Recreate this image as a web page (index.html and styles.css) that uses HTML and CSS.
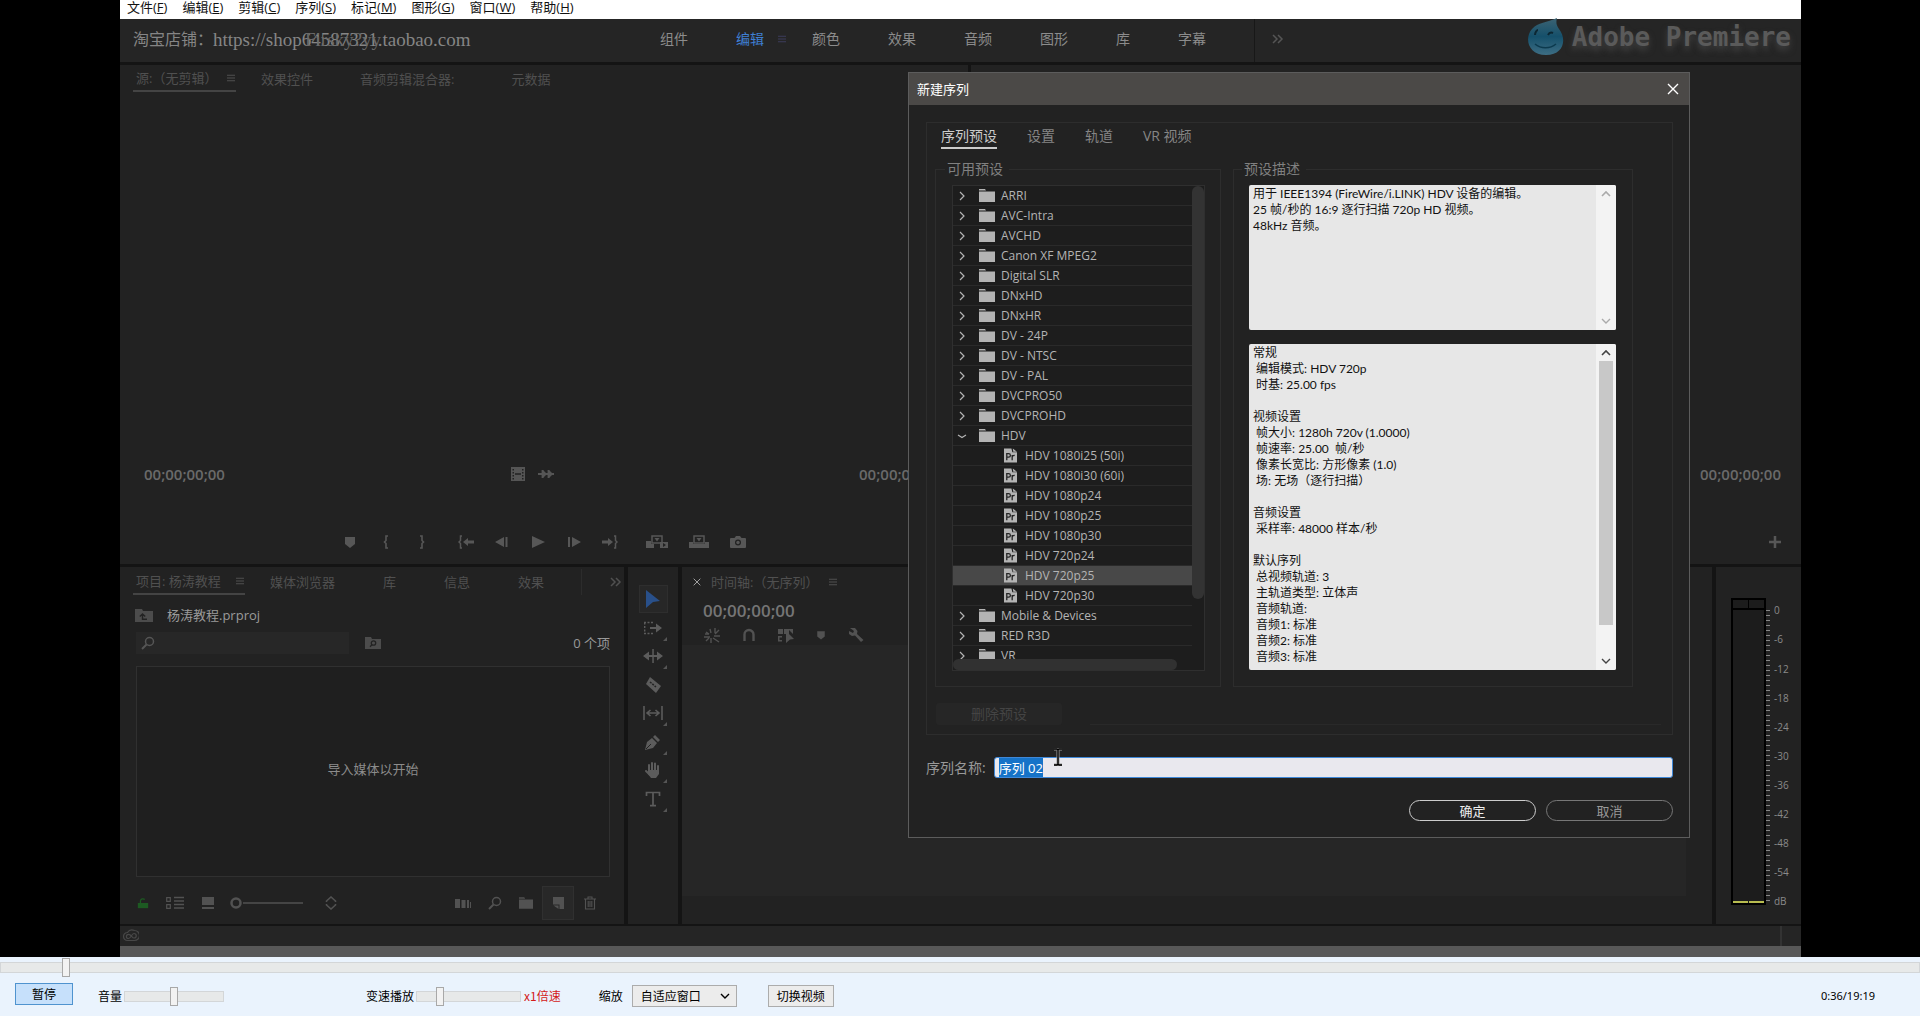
FILE: index.html
```html
<!DOCTYPE html>
<html lang="zh-CN">
<head>
<meta charset="utf-8">
<title>新建序列 - 视频播放器</title>
<link rel="stylesheet" href="styles.css">
</head>
<body>
<svg class="symbols" aria-hidden="true">
  <symbol id="i-menu" viewBox="0 0 10 10"><path d="M0 1.5h10M0 5h10M0 8.5h10" stroke="currentColor" stroke-width="1.3"/></symbol>
  <symbol id="i-more" viewBox="0 0 12 10"><path d="M1 1l4 4-4 4M6 1l4 4-4 4" fill="none" stroke="currentColor" stroke-width="1.5"/></symbol>
  <symbol id="i-film" viewBox="0 0 16 16"><path fill-rule="evenodd" d="M1 1h14v14H1zM2.500 3v1.500H4V3zM2.500 6v1.500H4V6zM2.500 9v1.500H4V9zM2.500 12v1.500H4V12zM12 3v1.500h1.500V3zM12 6v1.500h1.500V6zM12 9v1.500h1.500V9zM12 12v1.500h1.500V12zM5 7.300v1.400h6V7.300z" fill="currentColor"/></symbol>
  <symbol id="i-wave" viewBox="0 0 16 16"><path d="M0 8h16M4.500 4v8M10.500 4v8" stroke="currentColor" stroke-width="1.800"/><path d="M5 4l4 4-4 4zM11 4l4 4-4 4z" fill="currentColor"/></symbol>
  <symbol id="i-marker" viewBox="0 0 16 16"><path d="M3 3h10v7l-5 4-5-4z" fill="currentColor"/></symbol>
  <symbol id="i-in" viewBox="0 0 16 16"><path d="M10 2H8v4.500L6.500 8 8 9.500V14h2" fill="none" stroke="currentColor" stroke-width="1.600"/></symbol>
  <symbol id="i-out" viewBox="0 0 16 16"><path d="M6 2h2v4.500L9.500 8 8 9.500V14H6" fill="none" stroke="currentColor" stroke-width="1.600"/></symbol>
  <symbol id="i-goin" viewBox="0 0 16 16"><path d="M4 2H2.500v4.500L1 8l1.500 1.500V14H4" fill="none" stroke="currentColor" stroke-width="1.500"/><path d="M5 8l5-4v2.500h6v3h-6V12z" fill="currentColor"/></symbol>
  <symbol id="i-goout" viewBox="0 0 16 16"><path d="M12 2h1.500v4.500L15 8l-1.500 1.500V14H12" fill="none" stroke="currentColor" stroke-width="1.500"/><path d="M11 8L6 4v2.500H0v3h6V12z" fill="currentColor"/></symbol>
  <symbol id="i-back" viewBox="0 0 16 16"><path d="M10 3v10L1 8zM11.500 3h2v10h-2z" fill="currentColor"/></symbol>
  <symbol id="i-play" viewBox="0 0 16 16"><path d="M2 2l13 6-13 6z" fill="currentColor"/></symbol>
  <symbol id="i-fwd" viewBox="0 0 16 16"><path d="M6 3v10l9-5zM2 3h2v10H2z" fill="currentColor"/></symbol>
  <symbol id="i-insert" viewBox="0 0 22 16"><path d="M6 2h10v7H6z" fill="none" stroke="currentColor" stroke-width="1.500"/><path d="M8.500 4h5L11 7.500zM0 7h5v3h3v4H0zM14 8h8v6h-8z" fill="currentColor"/><path d="M17 9l3 2-3 2z" fill="#222"/></symbol>
  <symbol id="i-over" viewBox="0 0 22 16"><path d="M6 2h10v7H6z" fill="none" stroke="currentColor" stroke-width="1.500"/><path d="M8.500 4h5L11 7.500zM1 8h4v2h12V8h4v6H1z" fill="currentColor"/></symbol>
  <symbol id="i-camera" viewBox="0 0 16 16"><path fill-rule="evenodd" d="M1 4h3.500l1.500-2h4l1.500 2H15a1 1 0 0 1 1 1v8a1 1 0 0 1-1 1H1a1 1 0 0 1-1-1V5a1 1 0 0 1 1-1zM8 5.500a3 3 0 1 0 0 6 3 3 0 0 0 0-6z" fill="currentColor"/><circle cx="8" cy="8.500" r="1.700" fill="currentColor"/></symbol>
  <symbol id="i-plus" viewBox="0 0 12 12"><path d="M6 0v12M0 6h12" stroke="currentColor" stroke-width="2.500"/></symbol>
  <symbol id="i-upfolder" viewBox="0 0 18 14"><path d="M0 1h7l1 2h10v11H0z" fill="currentColor"/><path d="M7.500 12V6.500M4.800 8.500l2.700-2.500 2.700 2.500M7.500 11.300H12" fill="none" stroke="#222" stroke-width="1.400"/></symbol>
  <symbol id="i-search" viewBox="0 0 14 14"><circle cx="8.500" cy="5.500" r="4" fill="none" stroke="currentColor" stroke-width="1.500"/><path d="M5.500 8.500L1 13" stroke="currentColor" stroke-width="2"/></symbol>
  <symbol id="i-findfolder" viewBox="0 0 16 14"><path d="M0 1h6l1 2h9v10H0z" fill="currentColor"/><circle cx="8.500" cy="7" r="2.200" fill="none" stroke="#222" stroke-width="1.300"/><path d="M7 8.700L5 10.700" stroke="#222" stroke-width="1.300"/></symbol>
  <symbol id="i-lock" viewBox="0 0 14 14"><path d="M1 7h12v6H1z" fill="currentColor"/><path d="M4 7V4.500a3 3 0 0 1 5-1.500" fill="none" stroke="currentColor" stroke-width="1.500"/></symbol>
  <symbol id="i-list" viewBox="0 0 18 14"><path d="M.700 1.700h3.600v3.600H.700zM.700 8.700h3.600v3.600H.700z" fill="none" stroke="currentColor" stroke-width="1.200"/><path d="M8 1.500h10M8 5h10M8 8.500h10M8 12h10" stroke="currentColor" stroke-width="1.400"/></symbol>
  <symbol id="i-thumb" viewBox="0 0 14 14"><path d="M1 1h12v8H1zM1 11h12v2H1z" fill="currentColor"/></symbol>
  <symbol id="i-zoomknob" viewBox="0 0 74 14"><circle cx="7" cy="7" r="4.500" fill="none" stroke="currentColor" stroke-width="2.500"/><path d="M14 7h60" stroke="currentColor" stroke-width="1.500"/></symbol>
  <symbol id="i-sort" viewBox="0 0 12 14"><path d="M1.500 6V5L6 1l4.500 4v1M1.500 8v1L6 13l4.500-4V8" fill="none" stroke="currentColor" stroke-width="1.600"/></symbol>
  <symbol id="i-bars" viewBox="0 0 16 12"><path d="M0 2h5v9H0zM6.500 3h4v8h-4zM12 3h2v8h-2zM15 5h1v6h-1z" fill="currentColor"/></symbol>
  <symbol id="i-folder" viewBox="0 0 16 13"><path d="M0 0h6l1 1.500H0zM0 2.500h16V13H0z" fill="currentColor"/></symbol>
  <symbol id="i-newitem" viewBox="0 0 14 14"><path d="M2 1h11v12H8.500V8.500H2z" fill="currentColor"/><path d="M2.500 9.500h5V13z" fill="currentColor"/></symbol>
  <symbol id="i-trash" viewBox="0 0 12 14"><path d="M0 3h12M4 3V1h4v2M1.500 3v10h9V3M4.200 5v6M6 5v6M7.800 5v6" fill="none" stroke="currentColor" stroke-width="1.100"/></symbol>
  <symbol id="i-cc" viewBox="0 0 16 12"><path d="M4.500 11a4 4 0 0 1 0-8C6 .500 9 0 11.500 1a5 5 0 0 1 0 10zM11 8.500C9 8.500 8 4.500 5.500 4.800a2.100 2.100 0 0 0 0 4.200C8 9 8.500 4 11 4a2.200 2.200 0 0 1 0 4.500" fill="none" stroke="currentColor" stroke-width="1.200"/></symbol>
  <symbol id="t-arrow" viewBox="0 0 16 18"><path d="M1 0l14 11-7 1-7 6z" fill="currentColor"/></symbol>
  <symbol id="t-track" viewBox="0 0 20 20"><path d="M1 4.500h10M1 15.500h10M1.700 4.500v11" fill="none" stroke="currentColor" stroke-width="1.400" stroke-dasharray="2 1.500"/><path d="M7 9h6V5.500l6 4.500-6 4.500V11H7z" fill="currentColor"/></symbol>
  <symbol id="t-ripple" viewBox="0 0 20 20"><path d="M9.300 3h1.500v14H9.300zM0 10l6-4.500V9h8V5.500L20 10l-6 4.500V11H6v3.500z" fill="currentColor"/></symbol>
  <symbol id="t-razor" viewBox="0 0 20 20"><path d="M7 2l11 9-5 7L3 9z" fill="currentColor"/><path d="M7 7l6 5" stroke="#222" stroke-width="1.500" stroke-dasharray="2 1"/></symbol>
  <symbol id="t-slip" viewBox="0 0 20 20"><path d="M1 3v14M19 3v14M5 10h10M7.500 7L4 10l3.500 3M12.500 7l3.500 3-3.500 3" fill="none" stroke="currentColor" stroke-width="1.600"/></symbol>
  <symbol id="t-pen" viewBox="0 0 20 20"><path d="M12 3l5 5-2 2-5-5zM9 6l5 5-4 5-8 2 2-8z" fill="currentColor"/><path d="M3 17l5-5" stroke="#222"/></symbol>
  <symbol id="t-hand" viewBox="0 0 20 20"><path d="M6 12V5M9 11V3M12 11V3.500M15 12V6M7 15l-4-4" stroke="currentColor" stroke-width="2" stroke-linecap="round"/><path d="M5 10h11v4l-3 4H8l-3-4z" fill="currentColor"/></symbol>
  <symbol id="t-type" viewBox="0 0 20 20"><path d="M3.500 7V3.500h13V7M10 3.500v13M7 16.700h6" fill="none" stroke="currentColor" stroke-width="1.700"/></symbol>
  <symbol id="i-nest" viewBox="0 0 16 16"><path d="M0 10h6M2 5l3 2M6 2l1 4M11 1v5M15 3l-4 4M10 9h6M9 11l6 4M7 11v5M2 14l3-3M1 7h4" stroke="currentColor" stroke-width="1.400"/></symbol>
  <symbol id="i-magnet" viewBox="0 0 16 16"><path d="M3.500 14V7.500a4.500 4.500 0 0 1 9 0V14" fill="none" stroke="currentColor" stroke-width="2.400"/></symbol>
  <symbol id="i-link" viewBox="0 0 16 16"><path d="M0 2h5v5H0zM6 2h9v5l-4-4v9l-3 3V7H6zM0 9h4v1.500H1.500V13H4v1.500H0zM8 4l8 8-4 .5-4 3.500z" fill="currentColor"/></symbol>
  <symbol id="i-wrench" viewBox="0 0 16 16"><path d="M2 1l4 3-1 2-4-2v3l3 2 3-.500L13 15l2.500-2L9 7l.500-3L7 1z" fill="currentColor"/></symbol>
  <symbol id="i-close" viewBox="0 0 12 12"><path d="M1 1l10 10M11 1L1 11" stroke="currentColor" stroke-width="1.400"/></symbol>
  <symbol id="i-right" viewBox="0 0 8 10"><path d="M2 1l4 4-4 4" fill="none" stroke="currentColor" stroke-width="1.200"/></symbol>
  <symbol id="i-down" viewBox="0 0 10 8"><path d="M1 2l4 4 4-4" fill="none" stroke="currentColor" stroke-width="1.400"/></symbol>
  <symbol id="i-open" viewBox="0 0 10 8"><path d="M1 3l4 2.500L9 3" fill="none" stroke="currentColor" stroke-width="1.200"/></symbol>
  <symbol id="i-up" viewBox="0 0 10 8"><path d="M1 6l4-4 4 4" fill="none" stroke="currentColor" stroke-width="1.600"/></symbol>
  <symbol id="i-preset" viewBox="0 0 14 15"><path d="M0 0h8l1 4h5v11H0z" fill="#b4b4b4"/><path d="M9.500 0L14 3.500H10z" fill="#b4b4b4"/><path d="M3 12.500V5.500h2a1.900 1.900 0 0 1 0 3.800H3M8.800 12.500V7M8.800 9c.500-1.200 1.300-1.700 2.700-1.500" fill="none" stroke="#252525" stroke-width="1.400"/></symbol>
</svg>

<main class="stage">
  <div class="app">
    <nav class="menubar">
      <a href="#">文件(<u>F</u>)</a><a href="#">编辑(<u>E</u>)</a><a href="#">剪辑(<u>C</u>)</a><a href="#">序列(<u>S</u>)</a><a href="#">标记(<u>M</u>)</a><a href="#">图形(<u>G</u>)</a><a href="#">窗口(<u>W</u>)</a><a href="#">帮助(<u>H</u>)</a>
    </nav>

    <header class="workspaces">
      <p class="shop"><span>淘宝店铺：</span><span class="shop-url">https://shop64587321.taobao.com<span class="shop-ghost">Firsky?yy</span></span></p>
      <ul class="workspace-tabs">
        <li>组件</li>
        <li class="on">编辑<svg class="burger"><use href="#i-menu"/></svg></li>
        <li>颜色</li>
        <li>效果</li>
        <li>音频</li>
        <li>图形</li>
        <li class="single">库</li>
        <li>字幕</li>
      </ul>
      <button class="overflow" aria-label="更多工作区"><svg class="more"><use href="#i-more"/></svg></button>
      <div class="brand">
        <svg class="brand-drop" viewBox="0 0 36 38">
          <defs><linearGradient id="drop" x1="0" y1="0" x2="0" y2="1"><stop offset="0" stop-color="#3c6373"/><stop offset=".5" stop-color="#15506b"/><stop offset="1" stop-color="#3d6d83"/></linearGradient></defs>
          <path d="M29 0c-1 4-1 7 2 11 8 10 5 26-13 26S-4 20 4 11C10 4 19 5 29 0z" fill="url(#drop)"/>
          <path d="M7 17c0-3 2-5 3-5M20 17c1-2 3-3 5-2" fill="none" stroke="#0c2733" stroke-width="2"/>
          <path d="M7 26c6 5 15 5 21 0" fill="none" stroke="#0c3a4e" stroke-width="1.500"/>
        </svg>
        <span>Adobe Premiere</span>
      </div>
    </header>

    <div class="monitors">
      <section class="panel source">
        <ul class="tabs source-tabs">
          <li class="current">源:（无剪辑）<svg class="burger"><use href="#i-menu"/></svg></li>
          <li>效果控件</li>
          <li class="wide">音频剪辑混合器:</li>
          <li>元数据</li>
        </ul>
        <div class="monitor-info">
          <span class="timecode">00;00;00;00</span>
          <span class="drag"><svg class="i16"><use href="#i-film"/></svg><svg class="i16"><use href="#i-wave"/></svg></span>
          <span class="timecode">00;00;00;00</span>
        </div>
        <div class="transport">
          <svg class="i16"><use href="#i-marker"/></svg>
          <svg class="i16"><use href="#i-in"/></svg>
          <svg class="i16"><use href="#i-out"/></svg>
          <svg class="i16 split"><use href="#i-goin"/></svg>
          <svg class="i16"><use href="#i-back"/></svg>
          <svg class="i16"><use href="#i-play"/></svg>
          <svg class="i16"><use href="#i-fwd"/></svg>
          <svg class="i16"><use href="#i-goout"/></svg>
          <svg class="i22 split"><use href="#i-insert"/></svg>
          <svg class="i22"><use href="#i-over"/></svg>
          <svg class="i16"><use href="#i-camera"/></svg>
        </div>
      </section>
      <section class="panel program">
        <div class="monitor-info end"><span class="timecode">00;00;00;00</span></div>
        <div class="transport end"><svg class="i12"><use href="#i-plus"/></svg></div>
      </section>
    </div>

    <div class="lower">
      <section class="panel project">
        <ul class="tabs project-tabs">
          <li class="current">项目: 杨涛教程<svg class="burger"><use href="#i-menu"/></svg></li>
          <li>媒体浏览器</li>
          <li>库</li>
          <li>信息</li>
          <li>效果</li>
          <li class="last"><svg class="more"><use href="#i-more"/></svg></li>
        </ul>
        <div class="project-file"><svg class="i18"><use href="#i-upfolder"/></svg><span>杨涛教程.prproj</span></div>
        <div class="project-search">
          <label class="search"><svg class="i14"><use href="#i-search"/></svg><input type="text" aria-label="搜索"></label>
          <svg class="i16"><use href="#i-findfolder"/></svg>
          <span class="count">0 个项</span>
        </div>
        <div class="bin">导入媒体以开始</div>
        <div class="project-tools">
          <svg class="i12 lock"><use href="#i-lock"/></svg>
          <svg class="i18"><use href="#i-list"/></svg>
          <svg class="i14"><use href="#i-thumb"/></svg>
          <svg class="knob"><use href="#i-zoomknob"/></svg>
          <svg class="i14"><use href="#i-sort"/></svg>
          <span class="right">
            <svg class="i16"><use href="#i-bars"/></svg>
            <svg class="i14"><use href="#i-search"/></svg>
            <svg class="i14"><use href="#i-folder"/></svg>
            <button class="new-item" aria-label="新建项"><svg class="i14"><use href="#i-newitem"/></svg></button>
            <svg class="i14"><use href="#i-trash"/></svg>
          </span>
        </div>
      </section>

      <section class="panel tools">
        <button class="tool picked" aria-label="选择"><svg><use href="#t-arrow"/></svg></button>
        <button class="tool sub" aria-label="轨道选择"><svg><use href="#t-track"/></svg></button>
        <button class="tool sub" aria-label="波纹编辑"><svg><use href="#t-ripple"/></svg></button>
        <button class="tool" aria-label="剃刀"><svg><use href="#t-razor"/></svg></button>
        <button class="tool sub" aria-label="外滑"><svg><use href="#t-slip"/></svg></button>
        <button class="tool sub" aria-label="钢笔"><svg><use href="#t-pen"/></svg></button>
        <button class="tool sub" aria-label="手形"><svg><use href="#t-hand"/></svg></button>
        <button class="tool sub" aria-label="文字"><svg><use href="#t-type"/></svg></button>
      </section>

      <section class="panel timeline">
        <div class="timeline-tab"><svg class="i8"><use href="#i-close"/></svg><span>时间轴:（无序列）</span><svg class="burger"><use href="#i-menu"/></svg></div>
        <div class="timecode large">00;00;00;00</div>
        <div class="timeline-tools">
          <svg class="i16"><use href="#i-nest"/></svg>
          <svg class="i16"><use href="#i-magnet"/></svg>
          <svg class="i16"><use href="#i-link"/></svg>
          <svg class="i12"><use href="#i-marker"/></svg>
          <svg class="i16"><use href="#i-wrench"/></svg>
        </div>
        <div class="tracks"></div>
      </section>

      <section class="panel meters">
        <div class="meter"><div class="peak"><i></i><i></i></div><div class="level"><i></i><i></i></div></div>
        <div class="ticks"></div>
        <ol class="scale"><li>0</li><li>-6</li><li>-12</li><li>-18</li><li>-24</li><li>-30</li><li>-36</li><li>-42</li><li>-48</li><li>-54</li><li>dB</li></ol>
      </section>
    </div>

    <footer class="status"><svg class="cc"><use href="#i-cc"/></svg></footer>

    <section class="dialog" role="dialog" aria-labelledby="dialog-title">
      <header class="dialog-title"><h1 id="dialog-title">新建序列</h1><button aria-label="关闭"><svg class="i12"><use href="#i-close"/></svg></button></header>
      <div class="frame">
        <ul class="dialog-tabs"><li class="current">序列预设</li><li>设置</li><li>轨道</li><li>VR 视频</li></ul>
        <div class="groups">
          <fieldset class="presets">
            <legend>可用预设</legend>
            <div class="tree">
              <ul class="rows">
                <li><svg class="chev"><use href="#i-right"/></svg><svg class="fold"><use href="#i-folder"/></svg>ARRI</li>
                <li><svg class="chev"><use href="#i-right"/></svg><svg class="fold"><use href="#i-folder"/></svg>AVC-Intra</li>
                <li><svg class="chev"><use href="#i-right"/></svg><svg class="fold"><use href="#i-folder"/></svg>AVCHD</li>
                <li><svg class="chev"><use href="#i-right"/></svg><svg class="fold"><use href="#i-folder"/></svg>Canon XF MPEG2</li>
                <li><svg class="chev"><use href="#i-right"/></svg><svg class="fold"><use href="#i-folder"/></svg>Digital SLR</li>
                <li><svg class="chev"><use href="#i-right"/></svg><svg class="fold"><use href="#i-folder"/></svg>DNxHD</li>
                <li><svg class="chev"><use href="#i-right"/></svg><svg class="fold"><use href="#i-folder"/></svg>DNxHR</li>
                <li><svg class="chev"><use href="#i-right"/></svg><svg class="fold"><use href="#i-folder"/></svg>DV - 24P</li>
                <li><svg class="chev"><use href="#i-right"/></svg><svg class="fold"><use href="#i-folder"/></svg>DV - NTSC</li>
                <li><svg class="chev"><use href="#i-right"/></svg><svg class="fold"><use href="#i-folder"/></svg>DV - PAL</li>
                <li><svg class="chev"><use href="#i-right"/></svg><svg class="fold"><use href="#i-folder"/></svg>DVCPRO50</li>
                <li><svg class="chev"><use href="#i-right"/></svg><svg class="fold"><use href="#i-folder"/></svg>DVCPROHD</li>
                <li><svg class="chev"><use href="#i-open"/></svg><svg class="fold"><use href="#i-folder"/></svg>HDV</li>
                <li class="leaf"><svg class="doc"><use href="#i-preset"/></svg>HDV 1080i25 (50i)</li>
                <li class="leaf"><svg class="doc"><use href="#i-preset"/></svg>HDV 1080i30 (60i)</li>
                <li class="leaf"><svg class="doc"><use href="#i-preset"/></svg>HDV 1080p24</li>
                <li class="leaf"><svg class="doc"><use href="#i-preset"/></svg>HDV 1080p25</li>
                <li class="leaf"><svg class="doc"><use href="#i-preset"/></svg>HDV 1080p30</li>
                <li class="leaf"><svg class="doc"><use href="#i-preset"/></svg>HDV 720p24</li>
                <li class="leaf selected"><svg class="doc"><use href="#i-preset"/></svg>HDV 720p25</li>
                <li class="leaf"><svg class="doc"><use href="#i-preset"/></svg>HDV 720p30</li>
                <li><svg class="chev"><use href="#i-right"/></svg><svg class="fold"><use href="#i-folder"/></svg>Mobile &amp; Devices</li>
                <li><svg class="chev"><use href="#i-right"/></svg><svg class="fold"><use href="#i-folder"/></svg>RED R3D</li>
                <li><svg class="chev"><use href="#i-right"/></svg><svg class="fold"><use href="#i-folder"/></svg>VR</li>
              </ul>
              <div class="vbar"></div>
              <div class="hbar"></div>
            </div>
          </fieldset>
          <fieldset class="description">
            <legend>预设描述</legend>
            <div class="textbox about">
              <textarea readonly aria-label="预设描述">用于 IEEE1394 (FireWire/i.LINK) HDV 设备的编辑。
25 帧/秒的 16:9 逐行扫描 720p HD 视频。
48kHz 音频。</textarea>
              <div class="gutter faint"><svg class="i10"><use href="#i-up"/></svg><svg class="i10"><use href="#i-down"/></svg></div>
            </div>
            <div class="textbox details">
              <textarea readonly aria-label="预设详情">常规
 编辑模式: HDV 720p
 时基: 25.00 fps

视频设置
 帧大小: 1280h 720v (1.0000)
 帧速率: 25.00  帧/秒
 像素长宽比: 方形像素 (1.0)
 场: 无场（逐行扫描）

音频设置
 采样率: 48000 样本/秒

默认序列
 总视频轨道: 3
 主轨道类型: 立体声
 音频轨道:
 音频1: 标准
 音频2: 标准
 音频3: 标准</textarea>
              <div class="gutter"><svg class="i10"><use href="#i-up"/></svg><div class="thumb"></div><svg class="i10"><use href="#i-down"/></svg></div>
            </div>
          </fieldset>
        </div>
        <div class="remove"><button disabled>删除预设</button><hr></div>
      </div>
      <div class="name-row">
        <label for="seq-name">序列名称:</label>
        <input id="seq-name" type="text" value="序列 02">
        <svg class="ibeam" viewBox="0 0 10 18"><path d="M1 1h3l1 1 1-1h3M5 2v14M1 17h3l1-1 1 1h3" fill="none" stroke="#999" stroke-width="3"/><path d="M1 1h3l1 1 1-1h3M5 2v14M1 17h3l1-1 1 1h3" fill="none" stroke="#000" stroke-width="1.400"/></svg>
      </div>
      <div class="actions"><button class="ok">确定</button><button>取消</button></div>
    </section>
  </div>
</main>

<section class="player">
  <input class="seek" type="range" min="0" max="1000" value="32" aria-label="播放进度">
  <div class="controls">
    <button class="pause">暂停</button>
    <label class="volume">音量<input type="range" min="0" max="100" value="50"></label>
    <label class="speed">变速播放<input type="range" min="0" max="100" value="20"></label>
    <output class="rate">x1倍速</output>
    <label class="zoom">缩放<span class="select"><select><option>自适应窗口</option></select><svg class="i10"><use href="#i-down"/></svg></span></label>
    <button class="switch">切换视频</button>
    <time class="clock">0:36/19:19</time>
  </div>
</section>
<script src="app.js"></script>
</body>
</html>
```
FILE: styles.css
```css
* { box-sizing: border-box; }
body {
  margin: 0;
  min-height: 100vh;
  display: flex;
  flex-direction: column;
  background: #000;
  font: 13px/20px "Open Sans", "Noto Sans CJK SC", sans-serif;
  color: #aaa;
}
ul, ol { list-style: none; margin: 0; padding: 0; }
button, input, select, textarea { font: inherit; color: inherit; }
button { padding: 0; border: 0; background: none; }
svg { flex: none; display: block; }
.symbols { position: absolute; width: 0; height: 0; }
.i8 { width: 8px; height: 8px; }
.i10 { width: 10px; height: 10px; }
.i12 { width: 12px; height: 12px; }
.i14 { width: 14px; height: 14px; }
.i16 { width: 16px; height: 16px; }
.i18 { width: 18px; height: 14px; }
.i22 { width: 22px; height: 16px; }
.burger { width: 10px; height: 8px; }
.more { width: 12px; height: 10px; }

/* Premiere window */
.stage { flex: 1; display: flex; padding: 0 119px 0 120px; }
.app {
  position: relative;
  flex: 1;
  min-width: 0;
  display: flex;
  flex-direction: column;
  background: #141414;
  border-bottom: 11px solid #585858;
}
.menubar {
  height: 19px;
  display: flex;
  gap: 15px;
  padding-left: 7px;
  background: #fff;
  line-height: 15px;
}
.menubar a { color: #111; text-decoration: none; }
.workspaces {
  height: 43px;
  display: flex;
  align-items: center;
  background: #252525;
  margin-bottom: 3px;
}
.shop {
  width: 540px;
  margin: 0 0 2px;
  padding-left: 13px;
  display: flex;
  font: 16px/20px "Liberation Serif", "Noto Sans CJK SC", serif;
  color: #858585;
}
.shop-url { position: relative; font-size: 19px; }
.shop-ghost { position: absolute; left: 92px; top: 0; color: #6a6a6a; }
.workspace-tabs { display: flex; margin-bottom: 3px; font-size: 14px; color: #8c8c8c; }
.workspace-tabs li { width: 76px; display: flex; align-items: center; gap: 13px; }
.workspace-tabs .single { width: 62px; }
.workspace-tabs .on { color: #3f7fd2; }
.workspace-tabs .burger { color: #3c3c5c; }
.overflow {
  height: 43px;
  padding: 0 0 3px 17px;
  border-left: 1px solid #181818;
  color: #555;
}
.brand {
  display: flex;
  align-items: center;
  gap: 8px;
  margin: 0 10px 7px auto;
  font: bold 26px/30px "DejaVu Sans Mono", monospace;
  color: #5a5a5a;
  text-shadow: 0 4px 6px #444;
}
.brand-drop { width: 36px; height: 38px; }

.panel { background: #222; min-width: 0; }
.monitors { flex: 500 0 0; display: flex; gap: 3px; margin-bottom: 3px; }
.source, .program { display: flex; flex-direction: column; }
.source { width: 848px; }
.program { flex: 1; justify-content: flex-end; }
.tabs { display: flex; color: #505050; white-space: nowrap; }
.tabs li { flex: none; height: 26px; line-height: 26px; }
.tabs .current { display: flex; align-items: center; border-bottom: 2px solid #444; padding-left: 3px; }
.source-tabs { gap: 25px; padding: 1px 0 0 13px; margin-bottom: auto; }
.source-tabs .current { width: 103px; justify-content: space-between; }
.source-tabs .wide { margin: 0 32px 0 22px; }
.monitor-info {
  display: flex;
  justify-content: space-between;
  align-items: center;
  padding: 0 28px 0 24px;
  color: #555;
  margin-bottom: 50px;
}
.monitor-info .timecode { color: #6a6a6a; }
.monitor-info.end { justify-content: flex-end; padding-right: 20px; }
.timecode { font: 600 15px/20px "Open Sans", sans-serif; }
.timecode.large { font-size: 17px; }
.drag { display: flex; gap: 12px; margin-right: 20px; }
.transport {
  display: flex;
  justify-content: center;
  align-items: center;
  gap: 20px;
  color: #575757;
  height: 16px;
  margin-bottom: 14px;
}
.transport .split { margin-left: 8px; }
.transport.end { justify-content: flex-end; padding-right: 20px; }

.lower { flex: 357 0 0; display: flex; gap: 4px; margin-bottom: 2px; }
.project { width: 504px; display: flex; flex-direction: column; padding: 2px 14px 0 13px; }
.project-tabs { gap: 48px; }
.project-tabs .current { width: 112px; margin-right: -23px; justify-content: space-between; }
.project-tabs .last { padding: 8px 0 0 28px; border-left: 1px solid #2c2c2c; margin-left: -11px; }
.project-file { display: flex; align-items: center; gap: 14px; margin: 10px 0 7px 2px; color: #9a9a9a; }
.project-file svg, .project-search > svg { color: #4c4c4c; }
.project-search { display: flex; align-items: center; gap: 16px; padding-left: 3px; }
.search { width: 213px; height: 22px; display: flex; align-items: center; padding-left: 5px; background: #272727; color: #555; }
.search input { flex: 1; min-width: 0; border: 0; background: none; outline: none; }
.count { margin-left: auto; color: #999; }
.bin {
  flex: 1;
  margin: 12px 0 9px 3px;
  padding-bottom: 6px;
  display: flex;
  align-items: center;
  justify-content: center;
  background: #1f1f1f;
  border: 1px solid #303030;
  color: #8c8c8c;
}
.project-tools { display: flex; align-items: center; gap: 17px; padding-left: 4px; height: 34px; margin-bottom: 4px; color: #525252; }
.lock { color: #1d5a22; }
.knob { width: 74px; height: 14px; margin: 0 4px 0 -3px; }
.project-tools .right { margin: 0 13px 0 auto; display: flex; align-items: center; gap: 17px; }
.new-item { width: 32px; height: 34px; display: grid; place-items: center; background: #282828; border: 1px solid #303030; margin: 0 -8px; }

.tools { width: 50px; display: flex; flex-direction: column; align-items: center; padding-top: 18px; }
.tool { position: relative; width: 29px; height: 28px; margin-bottom: 1px; display: grid; place-items: center; color: #5c5c5c; }
.tool:nth-child(even) { margin-bottom: 0; }
.tool svg { width: 20px; height: 20px; }
.picked { color: #29508a; background: #272727; border: 1px solid #2e2e2e; }
.picked svg { width: 16px; height: 18px; }
.sub::after {
  content: "";
  position: absolute;
  right: 1px;
  bottom: 1px;
  border: 2px solid;
  border-color: transparent #555 #555 transparent;
}

.timeline { flex: 1; display: flex; flex-direction: column; padding-top: 1px; }
.timeline-tab { display: flex; align-items: center; gap: 10px; padding-left: 11px; height: 28px; color: #505050; }
.timeline-tab .i8 { color: #aaa; }
.timeline .timecode { padding: 5px 0 0 21px; color: #757575; }
.timeline-tools { display: flex; align-items: center; gap: 21px; padding: 6px 0 2px 22px; color: #525252; }
.tracks { flex: 1; margin: 0 26px 28px 0; background: #262626; }

.meters { width: 85px; display: flex; padding: 31px 8px 19px 15px; }
.meter { width: 35px; border: 2px solid #000; display: flex; flex-direction: column; background: #1c1c1c; }
.peak, .level { display: flex; gap: 1px; }
.peak { height: 10px; background: #000; border-bottom: 2px solid #000; }
.peak i { flex: 1; background: #1c1c1c; }
.level { margin-top: auto; height: 2px; }
.level i { flex: 1; background: #b8bc50; }
.ticks { width: 4px; margin: 12px 4px 0 0; background: repeating-linear-gradient(#888 0 1px, transparent 1px 5px); }
.scale { display: flex; flex-direction: column; justify-content: space-between; margin: 6px 0 -2px; font-size: 10px; color: #8a8a8a; }
.scale li { line-height: 12px; }

.status { height: 20px; background: linear-gradient(90deg, transparent calc(100% - 21px), #333 0 calc(100% - 19px), transparent 0) #252525; padding: 3px 0 0 3px; color: #484848; }
.cc { width: 16px; height: 13px; }

/* New sequence dialog */
.dialog {
  position: absolute;
  left: 788px;
  top: 72px;
  width: 782px;
  background: #222;
  border: 1px solid #5c5c5c;
}
.dialog-title {
  height: 32px;
  display: flex;
  align-items: center;
  justify-content: space-between;
  padding: 0 10px 0 8px;
  background: #4b4947;
  color: #fff;
}
.dialog-title h1 { margin: 0; font-size: 13px; font-weight: 400; }
.frame { margin: 17px 16px 0 17px; padding: 0 39px 9px 8px; border: 1px solid #2d2d2d; }
.dialog-tabs { display: flex; gap: 30px; padding-left: 6px; font-size: 14px; color: #858585; }
.dialog-tabs li { height: 26px; line-height: 26px; }
.dialog-tabs .current { color: #ccc; border-bottom: 2px solid #ccc; }
.groups { display: flex; gap: 12px; margin-top: 10px; }
fieldset { margin: 0; min-width: 0; border: 1px solid #2d2d2d; padding: 6px 15px 15px 16px; }
legend { margin-left: -7px; padding: 0 6px 0 2px; font-size: 14px; color: #808080; }
.presets { width: 286px; }
.tree {
  height: 486px;
  display: grid;
  grid-template: minmax(0, 1fr) 11px / 1fr 12px;
  overflow: hidden;
  background: #1d1d1d;
  border: 1px solid #2f2f2f;
}
.rows { min-height: 0; overflow: hidden; font-size: 12px; color: #b4b4b4; }
.rows li { height: 20px; display: flex; align-items: center; border-bottom: 1px solid #2a2a2a; }
.chev { width: 10px; height: 10px; margin: 0 12px 0 4px; }
.fold { width: 16px; height: 13px; margin-right: 6px; }
.rows .leaf { padding-left: 51px; gap: 8px; }
.doc { width: 13px; height: 15px; }
.rows .selected { background: #484848; }
.vbar { background: #333; border-radius: 6px; margin-bottom: 60px; }
.hbar { background: #313131; border-radius: 6px; margin-right: 15px; }
.description { flex: 1; padding-right: 16px; padding-left: 15px; }
.textbox { display: flex; background: #e7e7e7; border-radius: 2px; overflow: hidden; }
.about { height: 145px; margin-bottom: 14px; }
.details { height: 326px; }
textarea {
  flex: 1;
  min-width: 0;
  margin: 0;
  padding: 1px 4px 0;
  border: 0;
  background: none;
  resize: none;
  overflow: hidden;
  outline: none;
  line-height: 16px;
  color: #111;
  font-size: 12px;
  font-family: Lato, "Noto Sans CJK SC", sans-serif;
}
.gutter { width: 20px; padding: 4px 3px; display: flex; flex-direction: column; align-items: center; justify-content: space-between; background: #f3f3f3; color: #444; }
.faint { color: #aaa; }
.thumb { flex: 1; align-self: stretch; margin: 3px 0 31px; background: #c8c8c8; }
.remove { display: flex; align-items: flex-end; gap: 28px; margin: 16px -28px 0 1px; }
.remove button { width: 126px; height: 22px; background: #262626; border-radius: 3px; font-size: 14px; color: #444; }
.remove hr { flex: 1; margin: 0; border: 0; border-top: 1px solid #292929; }
.name-row { position: relative; display: flex; align-items: center; gap: 8px; margin: 22px 16px 0 17px; font-size: 14px; color: #999; }
.name-row input {
  flex: 1;
  height: 21px;
  padding: 0 4px;
  border: 1px solid #3f88d8;
  border-radius: 3px;
  background: #e9e8ee;
  color: #111;
  outline: none;
  font-size: 13px;
  caret-color: transparent;
}
.name-row input::selection { background: #1673c8; color: #fff; }
.ibeam { position: absolute; left: 127px; top: -9px; width: 10px; height: 18px; }
.actions { display: flex; justify-content: flex-end; gap: 10px; margin: 22px 16px 16px; }
.actions button { width: 127px; height: 21px; border: 1px solid #777; border-radius: 11px; line-height: 18px; color: #999; }
.actions .ok { border-color: #ccc; color: #eee; }

/* Player controls */
.player { background: #eaf3fd; color: #000; font: 12px/16px "Noto Sans CJK SC", sans-serif; height: 59px; }
input[type="range"] { appearance: none; display: block; margin: 0; background: none; height: 20px; }
input[type="range"]::-webkit-slider-runnable-track { height: 11px; background: #e7e9e9; border: 1px solid #d3d6d8; }
input[type="range"]::-webkit-slider-thumb { appearance: none; width: 8px; height: 19px; margin-top: -5px; background: #f2f2f2; border: 1px solid #a8a8a8; }
.seek { width: 100%; }
.controls { display: flex; align-items: center; padding: 8px 45px 0 15px; }
.controls button { height: 22px; border: 1px solid #acacac; background: #ececec; }
.controls .pause { width: 58px; border-color: #4f93cf; background: #c6e0fb; margin: -4px 25px 0 0; }
.controls label { display: flex; align-items: center; gap: 2px; }
.volume input { width: 100px; }
.speed { margin-left: 142px; }
.speed input { width: 105px; }
.rate { color: #d41a1a; margin: 0 38px 0 3px; }
.controls .zoom { gap: 9px; }
.select { display: flex; align-items: center; width: 105px; height: 22px; border: 1px solid #acacac; background: #ececec; padding-right: 6px; }
select { appearance: none; flex: 1; min-width: 0; border: 0; background: none; padding: 0 8px; height: 20px; outline: none; }
.controls .switch { width: 66px; margin-left: 31px; }
.clock { margin-left: auto; font: 11px/16px "Noto Sans", sans-serif; }
```
FILE: app.js
```js
const nameField = document.getElementById('seq-name');
nameField.focus({ preventScroll: true });
nameField.select();
```
